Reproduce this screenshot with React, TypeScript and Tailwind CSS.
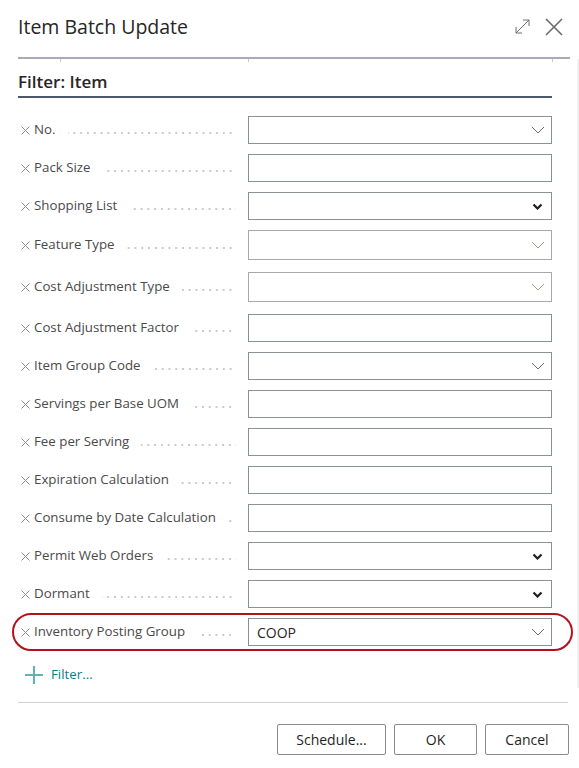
import React from "react";

type Kind = "text" | "combo" | "select" | "lookup";

const fields: { label: string; kind: Kind; tall?: boolean; value?: string }[] = [
  { label: "No.", kind: "combo" },
  { label: "Pack Size", kind: "text" },
  { label: "Shopping List", kind: "select" },
  { label: "Feature Type", kind: "lookup", tall: true },
  { label: "Cost Adjustment Type", kind: "lookup", tall: true },
  { label: "Cost Adjustment Factor", kind: "text" },
  { label: "Item Group Code", kind: "combo" },
  { label: "Servings per Base UOM", kind: "text" },
  { label: "Fee per Serving", kind: "text" },
  { label: "Expiration Calculation", kind: "text" },
  { label: "Consume by Date Calculation", kind: "text" },
  { label: "Permit Web Orders", kind: "select" },
  { label: "Dormant", kind: "select" },
];

function ThinChevron({ color }: { color: string }) {
  return (
    <svg width="14" height="8" viewBox="0 0 14 8" fill="none">
      <path d="M1 1l6 6 6-6" stroke={color} strokeWidth="1" />
    </svg>
  );
}

function BoldChevron() {
  return (
    <svg width="11" height="7" viewBox="0 0 11 7" fill="none">
      <path d="M1.5 1.5l4 4 4-4" stroke="#1f1f1f" strokeWidth="2.2" />
    </svg>
  );
}

function Remove() {
  return (
    <svg width="9" height="9" viewBox="0 0 9 9" className="mr-[4px] shrink-0">
      <path d="M0.5 0.5l8 8M8.5 0.5l-8 8" stroke="#8a8a8a" strokeWidth="1" />
    </svg>
  );
}

function Field({ label, kind, tall, value }: { label: string; kind: Kind; tall?: boolean; value?: string }) {
  const boxBorder = kind === "lookup" ? "border-[#a9a9a9]" : "border-[#8a919b]";
  return (
    <div className={`flex items-center ${tall ? "h-[30px]" : "h-[28px]"}`}>
      <div className="flex w-[230px] items-center pl-[3px] pr-[12px]">
        <Remove />
        <span className="whitespace-nowrap text-[13.3px] text-[#4a4a4a]">{label}</span>
        <div className="ml-[12px] mt-[6px] h-[2px] flex-1 bg-[linear-gradient(to_right,#cacaca_2px,transparent_2px)] bg-[length:6.8px_2px] bg-right bg-repeat-x" />
      </div>
      <div className={`flex h-full w-[304px] items-center justify-between border ${boxBorder} bg-white pl-[8px] pr-[6px]`}>
        <span className="text-[14px] text-[#262626]">{value}</span>
        {kind === "combo" && <ThinChevron color="#6b6b6b" />}
        {kind === "lookup" && <ThinChevron color="#b49a80" />}
        {kind === "select" && <span className="pr-[2px]"><BoldChevron /></span>}
      </div>
    </div>
  );
}

export default function App() {
  return (
    <div
      className="relative h-[768px] w-[579px] overflow-hidden bg-white"
      style={{ fontFamily: '"Open Sans", "Noto Sans", sans-serif' }}
    >
      {/* Header */}
      <div className="flex h-[57px] items-center justify-between pl-[18px] pr-[16px] pb-[4px]">
        <h1 className="text-[19.5px] text-[#262626]">Item Batch Update</h1>
        <div className="flex items-center gap-[14px]">
          <svg width="17" height="17" viewBox="0 0 17 17" fill="none">
            <path d="M2 15L15 2M9 2h6v6M2 9v6h6" stroke="#6e6e6e" strokeWidth="1" />
          </svg>
          <svg width="18" height="18" viewBox="0 0 18 18" fill="none">
            <path d="M1 1l16 16M17 1L1 17" stroke="#6a6a6a" strokeWidth="1.6" />
          </svg>
        </div>
      </div>
      <div className="ml-[18px] mr-[9px] h-[2px] bg-[#a7adb6]" />

      {/* Scroll area */}
      <div className="flex">
        <div className="flex-1 pl-[18px] pr-[18px]">
          <div className="relative h-[4px]">
            <div className="absolute left-[42px] top-0 h-[3px] w-px bg-[#c8c8c8]" />
            <div className="absolute left-[230px] top-0 h-[3px] w-px bg-[#c8c8c8]" />
            <div className="absolute left-[534px] top-0 h-[3px] w-px bg-[#c8c8c8]" />
          </div>
          <div className="w-[534px]">
            <div className="flex h-[33px] items-end pb-[2px] text-[17px] font-semibold text-[#262626]">Filter: Item</div>
            <div className="h-[2px] bg-[#4d5869]" />
          </div>

          <div className="mt-[18px] flex w-[534px] flex-col">
            {fields.map((f) => (
              <div key={f.label} className={f.tall ? "mb-[12px]" : "mb-[10px]"}>
                <Field {...f} />
              </div>
            ))}
            <div className="relative">
              <div className="pointer-events-none absolute -bottom-[5px] -left-[6px] -right-[21px] -top-[5px] rounded-[20px] border-[2.5px] border-[#b3121c]" />
              <Field label="Inventory Posting Group" kind="combo" value="COOP" />
            </div>
          </div>

          <div className="mt-[16px] flex h-[26px] items-center pl-[7px]">
            <svg width="18" height="18" viewBox="0 0 18 18" fill="none">
              <path d="M9 0v18M0 9h18" stroke="#5fb5b5" strokeWidth="2" />
            </svg>
            <span className="ml-[8px] text-[13.3px] text-[#0b7f86]">Filter...</span>
          </div>
        </div>
        <div className="w-[2px] bg-[#f1f1f1]" />
      </div>

      {/* Footer */}
      <div className="ml-[18px] mr-[11px] mt-[14px] h-px bg-[#d1d1d1]" />
      <div className="flex justify-end gap-[8px] pr-[10px] pt-[21px]">
        <button className="h-[31px] w-[109px] rounded-[2px] border border-[#8a8a8a] bg-white text-[14px] text-[#1f1f1f]">Schedule...</button>
        <button className="h-[31px] w-[83px] rounded-[2px] border border-[#8a8a8a] bg-white text-[14px] text-[#1f1f1f]">OK</button>
        <button className="h-[31px] w-[84px] rounded-[2px] border border-[#8a8a8a] bg-white text-[14px] text-[#1f1f1f]">Cancel</button>
      </div>
    </div>
  );
}
